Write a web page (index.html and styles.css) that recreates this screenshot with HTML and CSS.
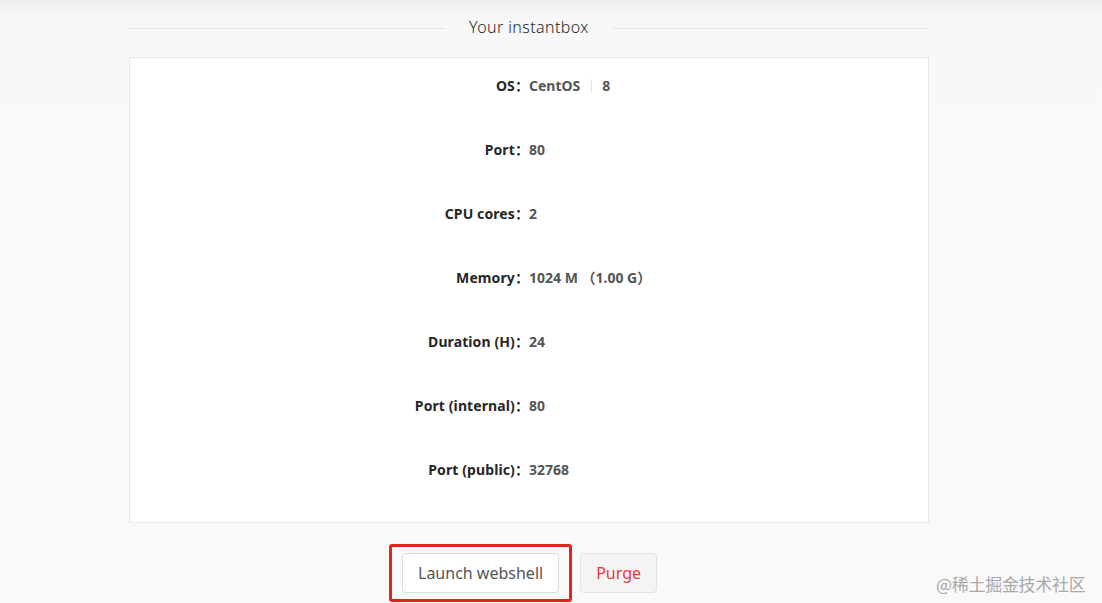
FILE: index.html
```html
<!DOCTYPE html>
<html lang="en">
<head>
<meta charset="utf-8">
<title>Your instantbox</title>
<link rel="stylesheet" href="styles.css">
</head>
<body>
<div class="page">
  <div class="container">
    <div class="divider"><span class="divider-text">Your instantbox</span></div>
    <div class="card">
      <div class="row"><div class="label">OS：</div><div class="value">CentOS<span class="sep"></span>8</div></div>
      <div class="row"><div class="label">Port：</div><div class="value">80</div></div>
      <div class="row"><div class="label">CPU cores：</div><div class="value">2</div></div>
      <div class="row"><div class="label">Memory：</div><div class="value">1024 M （1.00 G）</div></div>
      <div class="row"><div class="label">Duration (H)：</div><div class="value">24</div></div>
      <div class="row"><div class="label">Port (internal)：</div><div class="value">80</div></div>
      <div class="row"><div class="label">Port (public)：</div><div class="value">32768</div></div>
    </div>
    <div class="actions">
      <div class="highlight"><button class="btn">Launch webshell</button></div>
      <button class="btn btn-danger">Purge</button>
    </div>
  </div>
  <div class="watermark">@稀土掘金技术社区</div>
</div>
</body>
</html>
```

FILE: styles.css
```css
html, body {
  margin: 0;
  padding: 0;
}
body {
  width: 1102px;
  height: 603px;
  overflow: hidden;
  background: linear-gradient(to bottom, #eeeeee 0px, #f6f6f6 14px, #f8f8f8 30px, #f9f9f9 100%);
  font-family: "Noto Sans", "Noto Sans CJK SC", sans-serif;
  color: #333;
}
.page {
  position: relative;
  height: 603px;
}
.container {
  width: 800px;
  margin-left: 129px;
  padding-top: 16px;
}
.divider {
  display: flex;
  align-items: center;
  height: 24px;
  margin-bottom: 17px;
}
.divider::before,
.divider::after {
  content: "";
  flex: 1;
  border-top: 1px solid #e6e6e6;
}
.divider::before { flex: 0 0 316px; }
.divider-text {
  padding: 0 24px;
  font-size: 16px;
  font-weight: 300;
  letter-spacing: 0.4px;
  color: #262626;
  line-height: 24px;
  transform: translateY(-1px);
}
.card {
  background: #fff;
  border: 1px solid #e8e8e8;
  padding: 8px 0;
}
.row {
  display: grid;
  grid-template-columns: 1fr 1fr;
  height: 40px;
  align-items: center;
  margin-bottom: 24px;
  font-size: 14px;
  font-weight: 700;
  line-height: 40px;
}
.label {
  text-align: right;
  color: #262626;
  letter-spacing: 0.1px;
}
.value {
  color: #555;
  display: flex;
  align-items: center;
  white-space: pre;
}
.sep {
  display: inline-block;
  width: 1px;
  height: 14px;
  background: #e8e8e8;
  margin: 0 10px 0 11px;
}
.actions {
  display: flex;
  align-items: center;
  gap: 8px;
  margin-top: 21px;
  margin-left: 260px;
}
.highlight {
  border: 3px solid #e5231d;
  border-radius: 3px;
  padding: 6px 10px;
}
.btn {
  display: block;
  height: 40px;
  padding: 0 15px;
  font-family: "Noto Sans", sans-serif;
  font-size: 16px;
  color: #555;
  background: #fff;
  border: 1px solid #dcdcdc;
  border-radius: 4px;
}
.btn-danger {
  width: 77px;
  padding: 0;
  background: #f4f4f4;
  color: #e8373e;
  border-color: #e2e2e2;
}
.watermark {
  position: absolute;
  left: 936px;
  top: 571px;
  font-family: "Noto Sans CJK SC", sans-serif;
  font-size: 17px;
  color: #a8a8a8;
  letter-spacing: -0.3px;
}
```
